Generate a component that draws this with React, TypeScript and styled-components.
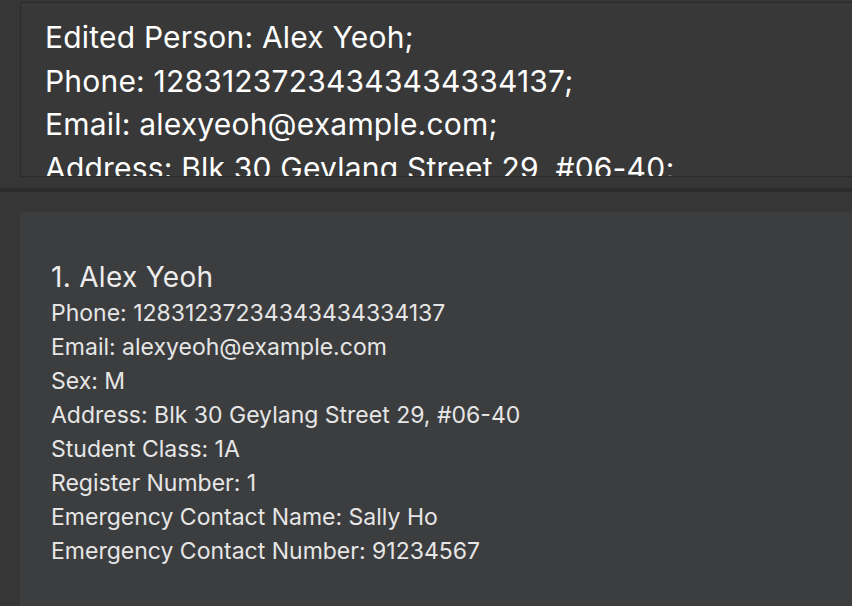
import React from "react";
import styled, { createGlobalStyle } from "styled-components";

const Global = createGlobalStyle`
  html, body { margin: 0; padding: 0; background: #363636; }
  body { font-family: Inter, "Noto Sans", sans-serif; overflow: hidden; }
`;

const Page = styled.div`
  width: 852px;
  height: 606px;
  display: flex;
  flex-direction: column;
  background: #363636;
  overflow: hidden;
`;

const ResultArea = styled.div`
  padding: 2px 0 0 20px;
  height: 175px;
  flex: none;
`;

const ResultBox = styled.div`
  box-sizing: border-box;
  width: calc(100% + 40px);
  height: 175px;
  border: 1px solid #2a2a2a;
  background: #383838;
  overflow: hidden;
  padding: 13px 24px 0;
`;

const ResultLine = styled.div`
  color: #ffffff;
  font-size: 30px;
  line-height: 43.5px;
  letter-spacing: 0.2px;
  white-space: nowrap;
`;

const Divider = styled.div`
  flex: none;
  margin-top: 11px;
  height: 4px;
  background: #2b2b2b;
`;

const ListArea = styled.div`
  flex: 1;
  display: flex;
  padding: 20px 0 0 20px;
`;

const Card = styled.div`
  flex: 1;
  background: #3c3d3f;
  padding: 46px 0 0 31px;
`;

const Name = styled.div`
  color: #ececec;
  font-size: 28px;
  line-height: 38px;
  letter-spacing: 0.3px;
`;

const Field = styled.div`
  color: #e6e6e6;
  font-size: 23px;
  line-height: 34px;
  letter-spacing: 0;
`;

const resultLines = [
  "Edited Person: Alex Yeoh;",
  "Phone: 12831237234343434334137;",
  "Email: alexyeoh@example.com;",
  "Address: Blk 30 Geylang Street 29, #06-40;",
];

const fields = [
  "Phone: 12831237234343434334137",
  "Email: alexyeoh@example.com",
  "Sex: M",
  "Address: Blk 30 Geylang Street 29, #06-40",
  "Student Class: 1A",
  "Register Number: 1",
  "Emergency Contact Name: Sally Ho",
  "Emergency Contact Number: 91234567",
];

export default function App() {
  return (
    <>
      <Global />
      <Page>
        <ResultArea>
          <ResultBox>
            {resultLines.map((l) => (
              <ResultLine key={l}>{l}</ResultLine>
            ))}
          </ResultBox>
        </ResultArea>
        <Divider />
        <ListArea>
          <Card>
            <Name>1. Alex Yeoh</Name>
            {fields.map((f) => (
              <Field key={f}>{f}</Field>
            ))}
          </Card>
        </ListArea>
      </Page>
    </>
  );
}
